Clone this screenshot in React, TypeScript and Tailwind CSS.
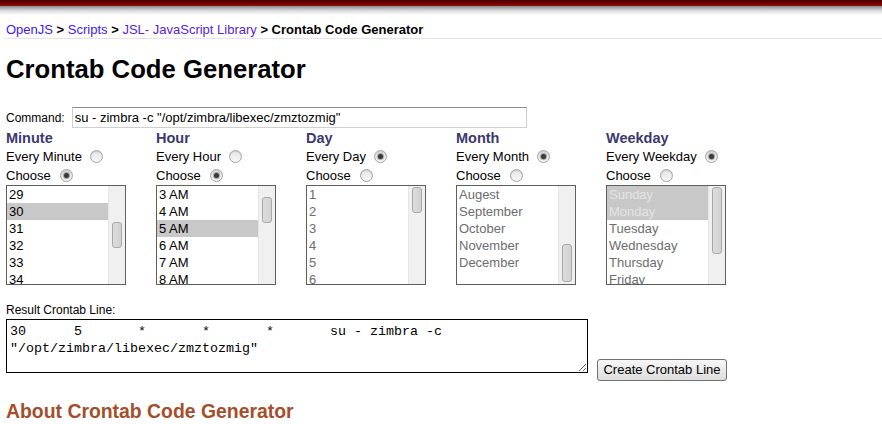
import React from "react"

interface ListProps {
  items: string[]
  selected: string[]
  disabled?: boolean
  thumbTop: number
  thumbHeight: number
}

function Radio({ checked }: { checked?: boolean }) {
  return (
    <span className="inline-flex items-center justify-center w-[13px] h-[13px] rounded-full border border-[#a2a2a2] bg-gradient-to-b from-[#e6e6e6] to-[#f7f7f7] shadow-[inset_0_1px_1px_rgba(0,0,0,0.12)]">
      {checked && <span className="w-[5px] h-[5px] rounded-full bg-[#3a3a3a] shadow-[0_0_1px_1px_rgba(60,60,60,0.45)]" />}
    </span>
  )
}

function ListBox({ items, selected, disabled, thumbTop, thumbHeight }: ListProps) {
  return (
    <div className="flex w-[120px] h-[100px] border border-[#5f5f5f] bg-white overflow-hidden">
      <div className="flex-1 min-w-0 flex flex-col">
        {items.map((it, i) => {
          const sel = selected.includes(it)
          let color = disabled ? "text-[#6d6d6d]" : "text-black"
          if (sel && disabled) color = "text-[#e4e4e4]"
          return (
            <div
              key={i}
              className={`h-[17px] shrink-0 leading-[17px] pl-[2px] text-[13px] whitespace-nowrap ${color} ${sel ? "bg-[#c8c8c8]" : ""}`}
            >
              {it}
            </div>
          )
        })}
      </div>
      <div className="w-[17px] shrink-0 bg-[#f0f0f0] border-l border-[#e6e6e6] flex justify-center">
        <div
          className="w-[10px] rounded-[3px] border border-[#a9a9a9] bg-gradient-to-r from-[#dcdcdc] to-[#d2d2d2]"
          style={{ marginTop: thumbTop, height: thumbHeight }}
        />
      </div>
    </div>
  )
}

interface Column {
  title: string
  every: string
  everyChecked: boolean
  list: ListProps
}

const columns: Column[] = [
  {
    title: "Minute",
    every: "Every Minute",
    everyChecked: false,
    list: { items: ["29", "30", "31", "32", "33", "34"], selected: ["30"], thumbTop: 36, thumbHeight: 26 },
  },
  {
    title: "Hour",
    every: "Every Hour",
    everyChecked: false,
    list: { items: ["3 AM", "4 AM", "5 AM", "6 AM", "7 AM", "8 AM"], selected: ["5 AM"], thumbTop: 11, thumbHeight: 26 },
  },
  {
    title: "Day",
    every: "Every Day",
    everyChecked: true,
    list: { items: ["1", "2", "3", "4", "5", "6"], selected: [], disabled: true, thumbTop: 1, thumbHeight: 26 },
  },
  {
    title: "Month",
    every: "Every Month",
    everyChecked: true,
    list: {
      items: ["Augest", "September", "October", "November", "December"],
      selected: [],
      disabled: true,
      thumbTop: 58,
      thumbHeight: 38,
    },
  },
  {
    title: "Weekday",
    every: "Every Weekday",
    everyChecked: true,
    list: {
      items: ["Sunday", "Monday", "Tuesday", "Wednesday", "Thursday", "Friday"],
      selected: ["Sunday", "Monday"],
      disabled: true,
      thumbTop: 1,
      thumbHeight: 67,
    },
  },
]

export default function App() {
  return (
    <div className="w-[882px] h-[424px] bg-white overflow-hidden font-['Liberation_Sans',Arial,sans-serif] text-black">
      {/* header bar */}
      <div className="h-[6px] bg-gradient-to-b from-[#4a0000] via-[#6e0000] to-[#8a1212]" />
      <div className="h-[9px] bg-gradient-to-b from-[#8c8c8c] via-[#d8d8d8] to-white" />

      <div className="ml-[5px] pl-[1px] pt-[7px] pb-[1px] border-b border-[#e4e4e4] text-[13px] leading-[15px] font-bold">
        <span className="font-normal text-[#3a19f5]">OpenJS</span> &gt;{" "}
        <span className="font-normal text-[#3a19f5]">Scripts</span> &gt;{" "}
        <span className="font-normal text-[#5524d8]">JSL- JavaScript Library</span> &gt; Crontab Code Generator
      </div>

      <div className="px-[6px]">
        <h1 className="mt-[15px] text-[25.7px] leading-[30px] font-bold">Crontab Code Generator</h1>

        <div className="mt-[23px] flex items-center gap-[7px]">
          <span className="text-[12px]">Command:</span>
          <input
            readOnly
            value={`su - zimbra -c "/opt/zimbra/libexec/zmztozmig"`}
            className="w-[455px] h-[21px] px-[2px] text-[13px] border border-[#cfcfcf] border-t-[#8e8e8e] outline-none"
          />
        </div>

        <div className="mt-[2px] flex">
          {columns.map((c) => (
            <div key={c.title} className="w-[150px] shrink-0">
              <div className="h-[17px] leading-[17px] text-[14.5px] font-bold text-[#3a3a6e]">{c.title}</div>
              <div className="h-[19px] flex items-center gap-[8px] text-[13px]">
                <span>{c.every}</span>
                <Radio checked={c.everyChecked} />
              </div>
              <div className="h-[19px] flex items-center gap-[9px] text-[13px]">
                <span>Choose</span>
                <Radio checked={!c.everyChecked} />
              </div>
              <ListBox {...c.list} />
            </div>
          ))}
        </div>

        <div className="mt-[18px] text-[12px] leading-[14px]">Result Crontab Line:</div>
        <div className="mt-[2px] flex items-start gap-[9px]">
          <textarea
            readOnly
            value={`30\t5\t*\t*\t*\tsu - zimbra -c "/opt/zimbra/libexec/zmztozmig"`}
            className="w-[582px] h-[54px] border border-black px-[3px] pt-[3px] text-[13.33px] leading-[17px] [tab-size:8] font-['Liberation_Mono','Courier_New',monospace] outline-none resize"
          />
          <button className="mt-[40px] w-[130px] h-[22px] text-[13px] border border-[#707070] rounded-[3px] bg-gradient-to-b from-[#f6f6f6] to-[#dddddd]">
            Create Crontab Line
          </button>
        </div>

        <h2 className="mt-[18px] text-[19.4px] leading-[24px] font-bold text-[#a34f2b]">About Crontab Code Generator</h2>
      </div>
    </div>
  )
}
